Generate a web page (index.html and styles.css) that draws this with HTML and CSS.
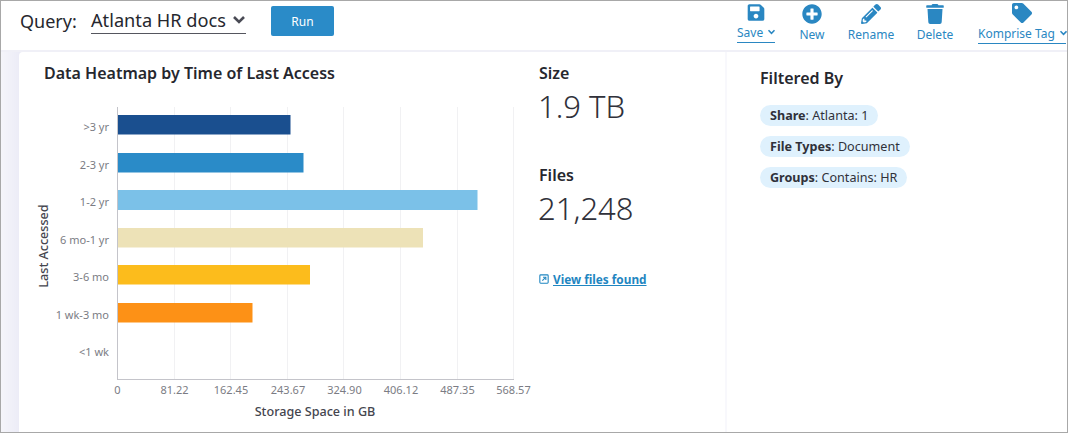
FILE: index.html
```html
<!DOCTYPE html>
<html lang="en">
<head>
<meta charset="utf-8">
<title>Query: Atlanta HR docs</title>
<link rel="stylesheet" href="styles.css">
</head>
<body>
<div class="frame">
  <header class="topbar">
    <div class="query">
      <span class="query-label">Query:</span>
      <div class="query-select">
        <span>Atlanta HR docs</span>
        <svg class="query-chevron" viewBox="0 0 14 10"><polyline points="2,2 7,7 12,2"/></svg>
      </div>
      <button class="run">Run</button>
    </div>
    <nav class="tools">
      <div class="tool tool-save">
        <svg class="icon icon-save" viewBox="0 0 448 512"><path d="M433.941 129.941l-83.882-83.882A48 48 0 0 0 316.118 32H48C21.49 32 0 53.49 0 80v352c0 26.51 21.49 48 48 48h352c26.51 0 48-21.49 48-48V163.882a48 48 0 0 0-14.059-33.941zM224 416c-35.346 0-64-28.654-64-64 0-35.346 28.654-64 64-64s64 28.654 64 64c0 35.346-28.654 64-64 64zm96-304.52V212c0 6.627-5.373 12-12 12H76c-6.627 0-12-5.373-12-12V108c0-6.627 5.373-12 12-12h228.52c3.183 0 6.235 1.264 8.485 3.515l3.48 3.48A11.996 11.996 0 0 1 320 111.48z"/></svg>
        <span class="tool-label tool-drop">Save <svg class="mini-chevron" viewBox="0 0 10 7"><polyline points="1.5,1.5 5,5 8.500,1.500"/></svg></span>
      </div>
      <div class="tool tool-new">
        <svg class="icon icon-new" viewBox="0 0 512 512"><path d="M256 8C119 8 8 119 8 256s111 248 248 248 248-111 248-248S393 8 256 8zm144 276c0 6.6-5.400 12-12 12h-92v92c0 6.600-5.400 12-12 12h-56c-6.600 0-12-5.400-12-12v-92h-92c-6.600 0-12-5.400-12-12v-56c0-6.600 5.400-12 12-12h92v-92c0-6.600 5.400-12 12-12h56c6.600 0 12 5.400 12 12v92h92c6.600 0 12 5.400 12 12v56z"/></svg>
        <span class="tool-label">New</span>
      </div>
      <div class="tool tool-rename">
        <svg class="icon icon-new" viewBox="0 0 512 512"><path d="M497.900 142.100l-46.100 46.100c-4.700 4.700-12.300 4.700-17 0l-111-111c-4.700-4.700-4.700-12.300 0-17l46.100-46.100c18.700-18.700 49.100-18.700 67.900 0l60.100 60.100c18.800 18.700 18.800 49.100 0 67.900zM284.200 99.800L21.600 362.400.4 483.900c-2.900 16.400 11.400 30.600 27.800 27.800l121.500-21.300 262.600-262.600c4.700-4.700 4.700-12.300 0-17l-111-111c-4.800-4.700-12.400-4.700-17.100 0zM124.100 339.900c-5.500-5.500-5.500-14.300 0-19.800l154-154c5.500-5.500 14.300-5.500 19.800 0s5.500 14.300 0 19.800l-154 154c-5.500 5.500-14.300 5.500-19.800 0zM88 424h48v36.300l-64.500 11.300-31.100-31.100L51.700 376H88v48z"/></svg>
        <span class="tool-label">Rename</span>
      </div>
      <div class="tool tool-delete">
        <svg class="icon icon-new" viewBox="0 0 448 512"><path d="M432 32H312l-9.400-18.700A24 24 0 0 0 281.100 0H166.800a23.720 23.720 0 0 0-21.400 13.300L136 32H16A16 16 0 0 0 0 48v32a16 16 0 0 0 16 16h416a16 16 0 0 0 16-16V48a16 16 0 0 0-16-16zM53.200 467a48 48 0 0 0 47.900 45h245.800a48 48 0 0 0 47.900-45L416 128H32z"/></svg>
        <span class="tool-label">Delete</span>
      </div>
      <div class="tool tool-tag">
        <svg class="icon icon-tag" viewBox="0 0 512 512"><path d="M0 252.118V48C0 21.490 21.490 0 48 0h204.118a48 48 0 0 1 33.941 14.059l211.882 211.882c18.745 18.745 18.745 49.137 0 67.882L293.823 497.941c-18.745 18.745-49.137 18.745-67.882 0L14.059 286.059A48 48 0 0 1 0 252.118zM112 64c-26.510 0-48 21.490-48 48s21.490 48 48 48 48-21.490 48-48-21.490-48-48-48z"/></svg>
        <span class="tool-label tool-drop">Komprise Tag <svg class="mini-chevron" viewBox="0 0 10 7"><polyline points="1.5,1.5 5,5 8.500,1.500"/></svg></span>
      </div>
    </nav>
  </header>
  <main class="content">
    <div class="rail"></div>
    <section class="chart-panel">
      <h2 class="chart-title">Data Heatmap by Time of Last Access</h2>
      <svg class="chart" viewBox="20 90 500 340">
        <g class="grid">
          <line x1="174.500" y1="108" x2="174.500" y2="380"/>
          <line x1="230.500" y1="108" x2="230.500" y2="380"/>
          <line x1="287.500" y1="108" x2="287.500" y2="380"/>
          <line x1="343.500" y1="108" x2="343.500" y2="380"/>
          <line x1="400.500" y1="108" x2="400.500" y2="380"/>
          <line x1="457.500" y1="108" x2="457.500" y2="380"/>
          <line x1="513.500" y1="108" x2="513.500" y2="380"/>
        </g>
        <rect class="bar-a" x="118" y="116" width="172.500" height="19.500"/>
        <rect class="bar-b" x="118" y="154" width="185.500" height="19.500"/>
        <rect class="bar-c" x="118" y="191" width="359.500" height="20"/>
        <rect class="bar-d" x="118" y="229" width="305" height="19.500"/>
        <rect class="bar-e" x="118" y="266" width="192" height="19.500"/>
        <rect class="bar-f" x="118" y="304" width="134.500" height="19.500"/>
        <g class="axis">
          <line x1="117.500" y1="108" x2="117.500" y2="380"/>
          <line x1="117" y1="380.500" x2="514" y2="380.500"/>
        </g>
        <g class="y-tick">
          <text x="109" y="132">&gt;3 yr</text>
          <text x="109" y="170">2-3 yr</text>
          <text x="109" y="207">1-2 yr</text>
          <text x="109" y="245">6 mo-1 yr</text>
          <text x="109" y="282">3-6 mo</text>
          <text x="109" y="320">1 wk-3 mo</text>
          <text x="109" y="357">&lt;1 wk</text>
        </g>
        <g class="x-tick">
          <text x="117.500" y="395">0</text>
          <text x="174.500" y="395">81.22</text>
          <text x="231" y="395">162.45</text>
          <text x="288" y="395">243.67</text>
          <text x="344.500" y="395">324.90</text>
          <text x="401" y="395">406.12</text>
          <text x="457.500" y="395">487.35</text>
          <text x="513.500" y="395">568.57</text>
        </g>
        <text class="axis-title" x="315" y="417">Storage Space in GB</text>
        <text class="axis-title" transform="translate(48 247) rotate(-90)">Last Accessed</text>
      </svg>
    </section>
    <section class="stats">
      <h3 class="stat-label">Size</h3>
      <div class="stat-value">1.9 TB</div>
      <h3 class="stat-label stat-label-files">Files</h3>
      <div class="stat-value">21,248</div>
      <a class="files-link" href="#">
        <svg class="link-icon" viewBox="0 0 12 12"><rect x="1" y="1" width="10" height="10" rx="1"/><polyline points="4,8 8,4"/><polyline points="4.800,3.800 8.200,3.800 8.200,7.200"/></svg>
        <span>View files found</span>
      </a>
    </section>
    <aside class="filters">
      <h3 class="filters-title">Filtered By</h3>
      <ul class="pills">
        <li class="pill"><b>Share</b>: Atlanta: 1</li>
        <li class="pill"><b>File Types</b>: Document</li>
        <li class="pill"><b>Groups</b>: Contains: HR</li>
      </ul>
    </aside>
  </main>
</div>
</body>
</html>
```
FILE: styles.css
```css
* { box-sizing: border-box; }
html, body { margin: 0; padding: 0; background: #fff; }
body { font-family: "Noto Sans", "Open Sans", sans-serif; color: #26272e; }
.frame { width: 1068px; height: 433px; border: 1px solid #a8a8a8; display: flex; flex-direction: column; overflow: hidden; }
.topbar { height: 51px; flex: none; display: flex; justify-content: space-between; border-bottom: 2px solid #f0f0f7; }
.query { display: flex; align-items: flex-start; padding: 4px 0 0 19px; }
.query-label { font-size: 18px; line-height: 28px; margin-top: 2px; width: 71px; }
.query-select { width: 155px; height: 29px; border-bottom: 1px solid #55565e; display: flex; align-items: center; justify-content: space-between; font-size: 18.200px; line-height: 28px; padding-top: 1px; }
.query-chevron { width: 14px; height: 10px; fill: none; stroke: #4a4b55; stroke-width: 2.600; }
.run { margin: 1px 0 0 25px; width: 63px; height: 30px; border: 0; border-radius: 2px; background: #2a8bc8; color: #fff; font: 12px "Noto Sans", sans-serif; }
.tools { display: flex; align-items: flex-start; color: #2a87c2; }
.tool { display: flex; flex-direction: column; align-items: center; font-size: 12px; }
.icon { fill: #2a87c2; display: block; }
.icon-save { width: 18px; height: 19px; margin-top: 2px; }
.icon-new { width: 20px; height: 20px; margin-top: 3px; }
.icon-tag { width: 20px; height: 20px; margin-top: 2px; }
.tool-label { line-height: 16px; margin-top: 3px; white-space: nowrap; }
.tool-drop { margin-top: 3px; padding-bottom: 1px; border-bottom: 1px solid #2a87c2; display: block; width: 100%; text-align: center; }
.tool-save { width: 38px; margin-right: 18px; }
.tool-new { width: 38px; margin-right: 17px; }
.tool-rename { width: 46px; margin-right: 22px; }
.tool-delete { width: 38px; margin-right: 24px; }
.tool-tag { width: 88px; margin-right: 1px; }
.mini-chevron { width: 9px; height: 6px; fill: none; stroke: #2a87c2; stroke-width: 1.800; margin-left: 1px; vertical-align: 2px; }
.content { flex: 1; display: flex; min-height: 0; background: linear-gradient(90deg, #f5f5fa, #eaeaf6) 0 0 / 22px 100% no-repeat; }
.rail { width: 18px; flex: none; }
.chart-panel { width: 501px; flex: none; position: relative; padding: 11px 0 0 25px; background: #fff; border-top-left-radius: 4px; }
.chart-title { margin: 0; font-size: 16px; line-height: 20px; font-weight: 600; white-space: nowrap; }
.chart { position: absolute; left: 1px; top: 37px; width: 500px; height: 340px; overflow: visible; }
.chart text { font-family: "Noto Sans", sans-serif; }
.grid line { stroke: #f1f1f3; stroke-width: 1; }
.axis line { stroke: #c4c4ca; stroke-width: 1; }
.bar-a { fill: #1a4f8f; }
.bar-b { fill: #2a8bc8; }
.bar-c { fill: #7bc1e8; }
.bar-d { fill: #ede2b7; }
.bar-e { fill: #fcbc1c; }
.bar-f { fill: #fd9116; }
.y-tick text { font-size: 11px; fill: #7b7c84; text-anchor: end; }
.x-tick text { font-size: 11px; fill: #7b7c84; text-anchor: middle; }
.axis-title { font-size: 12.600px; font-weight: 500; fill: #44454e; text-anchor: middle; }
.stats { width: 207px; flex: none; border-right: 2px solid #f8f8fc; padding: 10px 0 0 19px; }
.stat-label { margin: 0; font-size: 16px; line-height: 22px; font-weight: 600; }
.stat-label-files { margin-top: 37px; }
.stat-value { font-size: 31px; line-height: 42px; font-weight: 300; color: #30313a; margin-left: -1px; margin-top: 1px; }
.files-link { display: flex; align-items: center; gap: 4px; margin-top: 42px; color: #1f86c1; font-size: 11.800px; line-height: 16px; font-weight: 700; text-decoration: underline; }
.link-icon { width: 10px; height: 10px; fill: none; stroke: #1f86c1; stroke-width: 1.300; }
.filters { flex: 1; padding: 15px 0 0 33px; }
.filters-title { margin: 0 0 16px; font-size: 16px; line-height: 22px; font-weight: 600; }
.pills { list-style: none; margin: 0; padding: 0; display: flex; flex-direction: column; align-items: flex-start; gap: 10px; }
.pill { height: 21px; line-height: 21px; padding: 0 10px; border-radius: 11px; background: #dff1fd; font-size: 12.600px; white-space: nowrap; color: #30313a; }
.pill b { font-weight: 700; }
```
